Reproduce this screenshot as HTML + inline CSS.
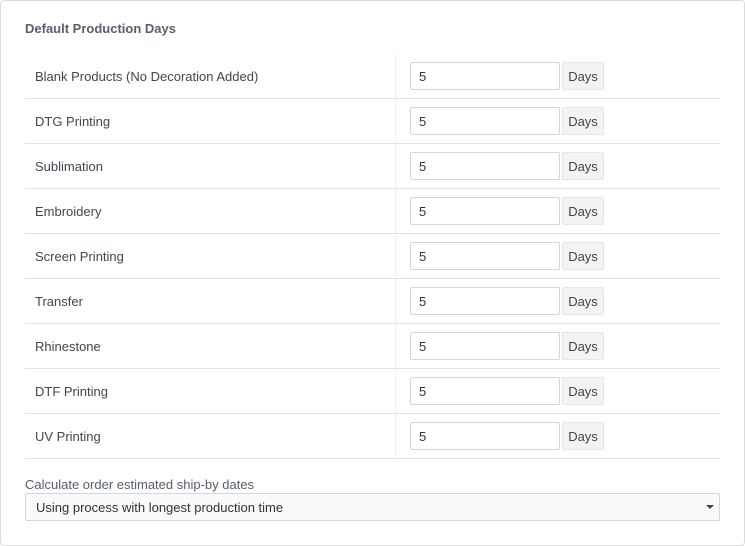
<!DOCTYPE html>
<html><head><style>
body{margin:0;background:#fff;font-family:"Liberation Sans",Arial,sans-serif;}
.card{position:absolute;left:0;top:0;width:743px;height:544px;border:1px solid #dcdcdc;border-radius:4px;background:#fff;}
h3{position:absolute;left:24px;top:20px;margin:0;font-size:13px;font-weight:bold;color:#56606b;}
.row{position:absolute;left:24px;width:695px;height:44px;border-bottom:1px solid #e2e2e2;}
.row .lab{position:absolute;left:10px;top:15px;font-size:13px;color:#3f4750;}
.row .div{position:absolute;left:370px;top:0;bottom:0;border-left:1px solid #f0f0f0;}
.row .inp{position:absolute;left:385px;top:8px;width:148px;height:26px;border:1px solid #d6d6d6;border-radius:2px;font-size:13px;color:#333;line-height:28px;text-indent:8px;}
.row .add{position:absolute;left:537px;top:8px;width:42px;height:28px;background:#f2f3f3;border:1px solid #e6e6e6;box-sizing:border-box;border-radius:2px;font-size:13px;color:#444;line-height:28px;text-align:center;}
.sl{position:absolute;left:24px;top:476px;font-size:13px;color:#56606b;}
.sel{position:absolute;left:24px;top:492px;width:693px;height:26px;border:1px solid #d6d6d6;border-radius:2px;background:#fafafa;font-size:13px;color:#333;line-height:28px;}
.sel span{position:absolute;left:10px;}
.sel i{position:absolute;right:5px;top:11px;width:0;height:0;border-left:4px solid transparent;border-right:4px solid transparent;border-top:4px solid #444;}
</style></head><body>
<div class="card">
<h3>Default Production Days</h3>
<div class="row" style="top:53px"><div class="lab">Blank Products (No Decoration Added)</div><div class="div"></div><div class="inp">5</div><div class="add">Days</div></div>
<div class="row" style="top:98px"><div class="lab">DTG Printing</div><div class="div"></div><div class="inp">5</div><div class="add">Days</div></div>
<div class="row" style="top:143px"><div class="lab">Sublimation</div><div class="div"></div><div class="inp">5</div><div class="add">Days</div></div>
<div class="row" style="top:188px"><div class="lab">Embroidery</div><div class="div"></div><div class="inp">5</div><div class="add">Days</div></div>
<div class="row" style="top:233px"><div class="lab">Screen Printing</div><div class="div"></div><div class="inp">5</div><div class="add">Days</div></div>
<div class="row" style="top:278px"><div class="lab">Transfer</div><div class="div"></div><div class="inp">5</div><div class="add">Days</div></div>
<div class="row" style="top:323px"><div class="lab">Rhinestone</div><div class="div"></div><div class="inp">5</div><div class="add">Days</div></div>
<div class="row" style="top:368px"><div class="lab">DTF Printing</div><div class="div"></div><div class="inp">5</div><div class="add">Days</div></div>
<div class="row" style="top:413px"><div class="lab">UV Printing</div><div class="div"></div><div class="inp">5</div><div class="add">Days</div></div>
<div class="sl">Calculate order estimated ship-by dates</div>
<div class="sel"><span>Using process with longest production time</span><i></i></div>
</div>
</body></html>
